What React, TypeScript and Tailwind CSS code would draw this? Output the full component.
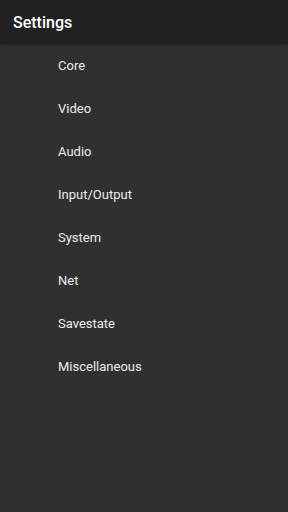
import React from "react";

const items = ["Core", "Video", "Audio", "Input/Output", "System", "Net", "Savestate", "Miscellaneous"];

export default function App() {
  return (
    <div className="w-[288px] h-[512px] bg-[#303030] flex flex-col" style={{ fontFamily: "Roboto, 'Noto Sans', sans-serif" }}>
      <div className="h-[44px] bg-[#212121] flex items-center px-[13px] pt-[2px] shadow-[0_1px_3px_rgba(0,0,0,0.3)]">
        <span className="text-[16px] font-medium text-white">Settings</span>
      </div>
      <div className="flex flex-col">
        {items.map((it) => (
          <div key={it} className="h-[43px] flex items-center pl-[58px] text-[13px] text-[#ececec]">
            {it}
          </div>
        ))}
      </div>
    </div>
  );
}
